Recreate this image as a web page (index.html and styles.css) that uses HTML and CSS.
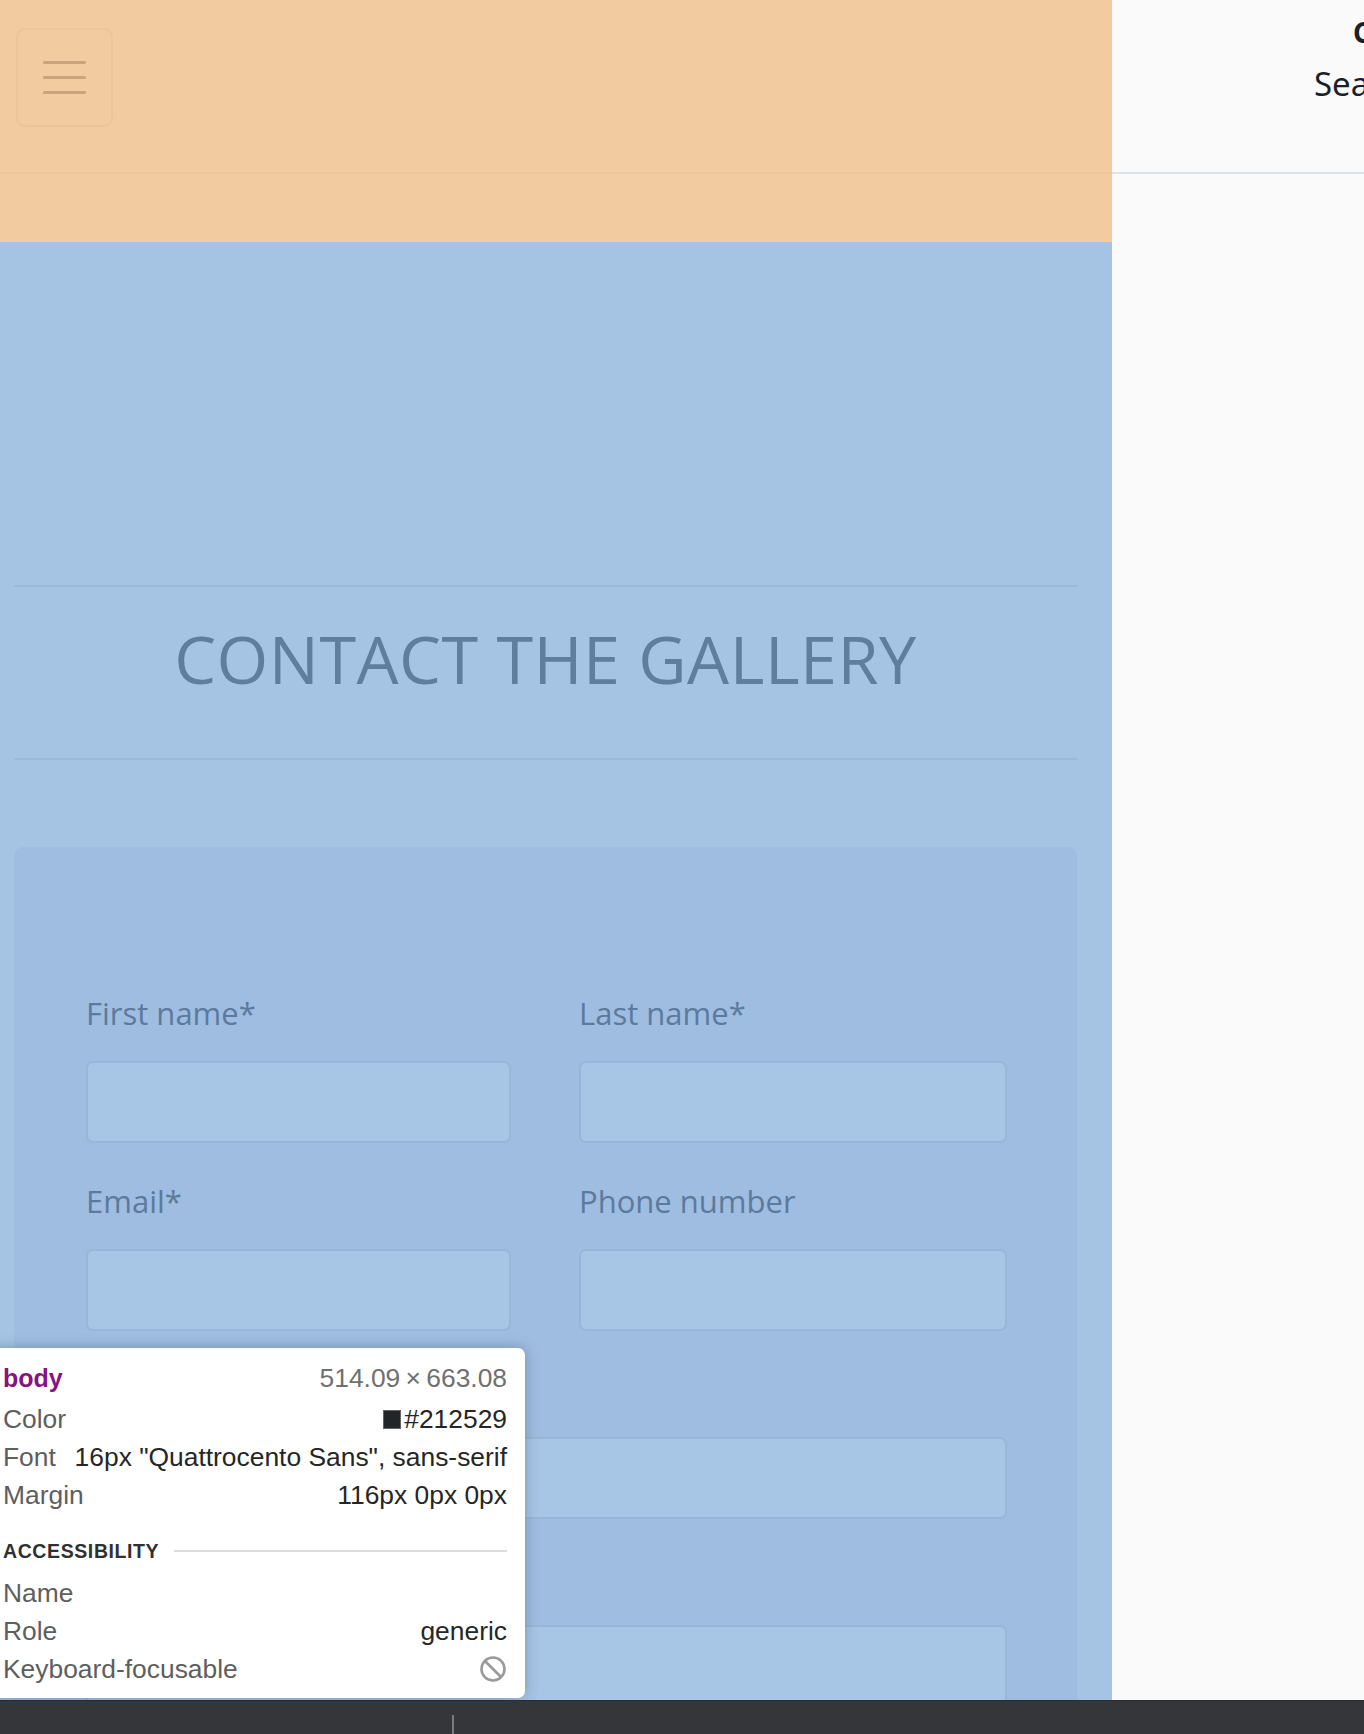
FILE: index.html
```html
<!DOCTYPE html>
<html lang="en">
<head>
<meta charset="utf-8">
<title>Contact the Gallery</title>
<link rel="stylesheet" href="styles.css">
</head>
<body>
<div class="screen">
  <div class="left">
    <header class="topbar">
      <button class="burger" type="button" aria-label="Menu">
        <span class="bar"></span><span class="bar"></span><span class="bar"></span>
      </button>
    </header>
    <div class="spacer"></div>
    <main class="content">
      <hr class="rule">
      <h1 class="title">CONTACT THE GALLERY</h1>
      <hr class="rule rule-bottom">
      <section class="card">
        <form class="form">
          <div class="field">
            <label class="label">First name*</label>
            <div class="input"></div>
          </div>
          <div class="field">
            <label class="label">Last name*</label>
            <div class="input"></div>
          </div>
          <div class="field">
            <label class="label">Email*</label>
            <div class="input"></div>
          </div>
          <div class="field">
            <label class="label">Phone number</label>
            <div class="input"></div>
          </div>
          <div class="field wide">
            <label class="label">Subject*</label>
            <div class="input"></div>
          </div>
          <div class="field wide">
            <label class="label">Message*</label>
            <div class="input tall"></div>
          </div>
        </form>
      </section>
    </main>
  </div>
  <aside class="right">
    <div class="side-head">
      <div class="side-title">Contact</div>
      <div class="side-search">Search</div>
    </div>
  </aside>

  <div class="inspector">
    <div class="row row-first">
      <span class="tag">body</span>
      <span class="dims">514.09&thinsp;×&thinsp;663.08</span>
    </div>
    <div class="row">
      <span class="key">Color</span>
      <span class="val"><span class="swatch"></span>#212529</span>
    </div>
    <div class="row">
      <span class="key">Font</span>
      <span class="val">16px "Quattrocento Sans", sans-serif</span>
    </div>
    <div class="row">
      <span class="key">Margin</span>
      <span class="val">116px 0px 0px</span>
    </div>
    <div class="section-head">
      <span class="section-title">ACCESSIBILITY</span>
      <span class="section-line"></span>
    </div>
    <div class="row">
      <span class="key">Name</span>
      <span class="val"></span>
    </div>
    <div class="row">
      <span class="key">Role</span>
      <span class="val">generic</span>
    </div>
    <div class="row">
      <span class="key">Keyboard-focusable</span>
      <span class="val">
        <svg class="noentry" width="28" height="28" viewBox="0 0 28 28" aria-hidden="true">
          <circle cx="14" cy="14" r="11.5" fill="none" stroke="#9a9a9a" stroke-width="2.6"/>
          <line x1="6" y1="6" x2="22" y2="22" stroke="#9a9a9a" stroke-width="2.6"/>
        </svg>
      </span>
    </div>
  </div>
</div>
<footer class="devbar">
  <span class="devbar-sep"></span>
</footer>
</body>
</html>
```

FILE: styles.css
```css
* { box-sizing: border-box; }

html, body {
  margin: 0;
  padding: 0;
}

body {
  width: 1364px;
  height: 1734px;
  overflow: hidden;
  font-family: "Open Sans", "Liberation Sans", sans-serif;
  background: #fafafa;
}

.screen {
  position: relative;
  display: flex;
  height: 1700px;
  overflow: hidden;
}

.left {
  width: 1112px;
  flex: none;
  display: flex;
  flex-direction: column;
  background: #a5c4e3;
}

.topbar {
  flex: none;
  height: 174px;
  background: #f2cba1;
  border-bottom: 2px solid #ecc59b;
  padding: 28px 0 0 16px;
}

.burger {
  width: 97px;
  height: 99px;
  border: 2px solid #ecc59c;
  border-radius: 9px;
  background: #f2cba1;
  padding: 0;
  display: flex;
  flex-direction: column;
  align-items: center;
  justify-content: center;
  gap: 11.5px;
}

.bar {
  display: block;
  width: 43px;
  height: 3.4px;
  border-radius: 2px;
  background: #caa47c;
}

.spacer {
  flex: none;
  height: 68px;
  background: #f2cba1;
}

.content {
  flex: none;
  padding: 343px 35px 0 14px;
}

.rule {
  margin: 0;
  height: 2px;
  border: 0;
  background: #9bb9d9;
}

.title {
  margin: 31px 0 60px;
  text-align: center;
  font-family: "Open Sans", sans-serif;
  font-weight: 400;
  font-size: 66.5px;
  line-height: 80px;
  color: #5f7d9c;
  letter-spacing: 0.5px;
}

.rule-bottom {
  margin-bottom: 87px;
}

.card {
  background: #9fbde1;
  border-radius: 9px;
  padding: 148px 70px 0 72px;
  height: 900px;
}

.form {
  display: grid;
  grid-template-columns: 425px 428px;
  column-gap: 68px;
  row-gap: 40px;
}

.field.wide {
  grid-column: 1 / -1;
}

.label {
  display: block;
  font-family: "Open Sans", sans-serif;
  font-size: 31px;
  line-height: 37px;
  color: #5c7a9b;
  margin-bottom: 29px;
}

.input {
  height: 82px;
  border: 2px solid #98b6d7;
  border-radius: 7px;
  background: #a7c5e5;
}

.input.tall {
  height: 160px;
}

.right {
  flex: 1;
  background: #fafafa;
  overflow: hidden;
}

.side-head {
  height: 174px;
  border-bottom: 2px solid #dee2e6;
  padding-top: 15px;
  white-space: nowrap;
  font-family: "Noto Sans", "Open Sans", sans-serif;
  color: #1b1f29;
}

.side-title {
  margin-left: 241px;
  font-size: 28px;
  font-weight: 700;
  line-height: 34px;
}

.side-search {
  margin-left: 202px;
  margin-top: 15px;
  font-size: 33px;
  line-height: 40px;
}

/* DevTools inspector tooltip overlaying the page */
.inspector {
  position: absolute;
  left: -12px;
  top: 1348px;
  width: 537px;
  height: 350px;
  background: #ffffff;
  border-radius: 7px;
  box-shadow: 0 0 14px rgba(40, 60, 90, 0.35);
  padding: 8px 18px 10px 15px;
  font-family: "Liberation Sans", Arial, sans-serif;
  font-size: 26.4px;
}

.row {
  height: 38px;
  display: flex;
  align-items: center;
  justify-content: space-between;
  white-space: nowrap;
}

.row-first {
  height: 44px;
}

.tag {
  font-weight: 700;
  font-size: 25px;
  color: #881280;
}

.dims {
  color: #707070;
}

.key {
  color: #5e5e5e;
}

.val {
  color: #262626;
  display: flex;
  align-items: center;
}

.swatch {
  display: inline-block;
  width: 18px;
  height: 19px;
  background: #212529;
  border: 1.5px solid #666;
  margin-right: 3px;
}

.section-head {
  height: 38px;
  margin: 18px 0 4px;
  display: flex;
  align-items: center;
}

.section-title {
  font-weight: 700;
  font-size: 19.5px;
  letter-spacing: 0.6px;
  color: #303030;
}

.section-line {
  flex: 1;
  height: 2px;
  background: #dddddd;
  margin-left: 15px;
}

.noentry {
  display: block;
}

.devbar {
  height: 34px;
  background: #35363a;
  border-top: 1px solid #2a2b2e;
  position: relative;
}

.devbar-sep {
  position: absolute;
  left: 452px;
  top: 14px;
  width: 2px;
  height: 20px;
  background: #7a7b7e;
}
```
